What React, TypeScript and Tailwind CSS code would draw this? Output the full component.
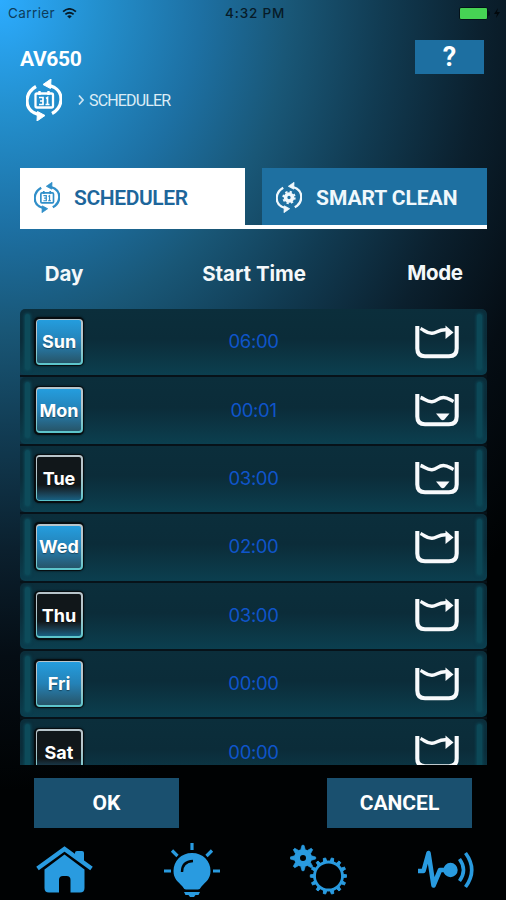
import React from "react";

type Mode = "side" | "bottom";
type Slot = { day: string; time: string; on: boolean; mode: Mode };

const SLOTS: Slot[] = [
  { day: "Sun", time: "06:00", on: true, mode: "side" },
  { day: "Mon", time: "00:01", on: true, mode: "bottom" },
  { day: "Tue", time: "03:00", on: false, mode: "bottom" },
  { day: "Wed", time: "02:00", on: true, mode: "side" },
  { day: "Thu", time: "03:00", on: false, mode: "side" },
  { day: "Fri", time: "00:00", on: true, mode: "side" },
  { day: "Sat", time: "00:00", on: false, mode: "side" },
];

/* Two circular arrows around a calendar or a gear; drawn on a 36x42 grid. */
function CycleIcon({ kind, className }: { kind: "calendar" | "gear"; className: string }) {
  return (
    <svg viewBox="0 0 36 42" className={className} fill="none" stroke="currentColor">
      <path d="M10 7.500C-1.500 14-1.500 28 7.500 33.500L16 37" strokeWidth="3.200" />
      <path d="M26 34.500C37.500 28 37.500 14 28.500 8.500L20 5" strokeWidth="3.200" />
      <path d="M17 5.500L25 0L24.500 9.500Z M19 36.500L11 42L11.500 32.500Z" fill="currentColor" strokeWidth="1" strokeLinejoin="round" />
      {kind === "calendar" ? (
        <>
          <rect x="9.500" y="14.500" width="17.500" height="14" rx="1.500" strokeWidth="2.300" />
          <path d="M13.500 12v4M22.500 12v4" strokeWidth="2.400" />
          <path d="M13 18.500h4v7h-4M14 22h3M20 19.500l1.500-1v7M19.500 25.500h4" strokeWidth="1.700" />
        </>
      ) : (
        <>
          <circle cx="18" cy="21" r="4.800" strokeWidth="5" />
          <circle cx="18" cy="21" r="8" strokeWidth="2.500" strokeDasharray="3.142 3.142" />
        </>
      )}
    </svg>
  );
}

function ModeIcon({ mode }: { mode: Mode }) {
  return (
    <svg viewBox="0 0 44 34" className="h-[34px] w-[44px]" fill="none" stroke="#f8fafc">
      <path d="M2.300 1V23.500C2.300 28.500 5 31.200 10 31.200H34C39 31.200 41.700 28.500 41.700 23.500V1" strokeWidth="4.100" />
      {mode === "side" ? (
        <>
          <path d="M5.500 3.500C10 5.500 12 8.500 17 8.300C22 8.200 23 4.500 31 4.800" strokeWidth="3.500" />
          <path d="M30.500 .5L38.500 7.500L30.500 14Z" fill="#f8fafc" stroke="none" />
        </>
      ) : (
        <>
          <path d="M5.500 4.500C10 6 12 9 17 8.700C22 8.500 23 4.500 28.500 4.500C33 4.500 35 7 38.500 8.500" strokeWidth="3.500" />
          <path d="M21 20.500H34.500L29.500 26.500Q27.800 28 26 26.500Z" fill="#f8fafc" stroke="none" />
        </>
      )}
    </svg>
  );
}

function DayButton({ slot }: { slot: Slot }) {
  return (
    <div className="h-[49px] w-[50px] shrink-0 rounded-[5px] bg-[#070d10] p-[1.500px] shadow-[0_0_2px_#070d10]">
      <div className="h-full w-full rounded-[4px] bg-linear-to-b from-[#b8c5cb] from-35% to-[#58c5cb] p-[1.800px]">
        <div
          className={
            "flex h-full w-full items-center justify-center rounded-[2px] bg-linear-to-b text-[18px] font-bold text-white " +
            (slot.on
              ? "from-[#249dde] via-[#2482b7] to-[#265569]"
              : "from-[#11171a] from-65% to-[#176082]")
          }
        >
          <span className="[text-shadow:0_1px_1px_#0006]">{slot.day}</span>
        </div>
      </div>
    </div>
  );
}

function ScheduleRow({ slot }: { slot: Slot }) {
  return (
    <div className="flex h-[68.400px] shrink-0 flex-col border-b-[2px] border-[#071219] bg-[#071821]/40">
      <div className="flex min-h-0 flex-1 items-center rounded-[5px] bg-linear-to-b from-[#0b2e3b] via-[#0b2c39] via-45% to-[#0b3f4f] pb-px">
        <div className="ml-[5px] h-[56px] w-[5px] rounded-full bg-[#0d4b5a] shadow-[0_0_3px_1px_#0d4b5a]" />
        <div className="ml-[4px]"><DayButton slot={slot} /></div>
        <div className="ml-[103.500px] w-[132px] pt-px text-center text-[18.500px] tracking-[-0.350px] text-[#0f55ca]">{slot.time}</div>
        <div className="ml-[95.500px]"><ModeIcon mode={slot.mode} /></div>
        <div className="ml-auto mr-[5px] h-[56px] w-[5px] rounded-full bg-[#0c4857] shadow-[0_0_3px_1px_#0c4857]" />
      </div>
    </div>
  );
}

const NAV = "text-[#299be0]";

function HouseIcon() {
  return (
    <svg viewBox="0 0 57 48" className={NAV + " h-[48px] w-[57px]"} fill="currentColor">
      <path d="M1.500 22.500L28.500 3L55.500 22.500" fill="none" stroke="currentColor" strokeWidth="4.300" />
      <path d="M39 7.500V6.500Q39 5 41 5H46Q48 5 48 7V16L39 9.500Z" />
      <path d="M8.500 23.500L28.500 8.500L48.500 23.500V42Q48.500 46.500 44 46.500H34.500V34Q34.500 30 30.500 30H27Q23 30 23 34V46.500H13Q8.500 46.500 8.500 42Z" />
    </svg>
  );
}

function BulbIcon() {
  return (
    <svg viewBox="0 0 56 55" className={NAV + " h-[55px] w-[56px]"}>
      <path d="M28 0V7M8 7.500L13.500 13M48 7.500L42.500 13M0 28H7M49 28H56" stroke="currentColor" strokeWidth="3.200" />
      <path d="M28 10C17 10 9.500 18 9.500 28C9.500 36 14 38.500 18.500 43.500Q20 46.500 22 46.500H34Q36 46.500 37.500 43.500C42 38.500 46.500 36 46.500 28C46.500 18 39 10 28 10Z" fill="currentColor" />
      <path d="M18 29Q18 18.500 29 18" fill="none" stroke="#02070a" strokeWidth="2.400" />
      <path d="M20 49H36L34.500 52H31.500L30 54H26L24.500 52H21.500Z" fill="currentColor" />
    </svg>
  );
}

function GearsIcon() {
  const smallTeeth = Array.from({ length: 8 }, (_, i) => i * 45);
  const largeTeeth = Array.from({ length: 14 }, (_, i) => (i * 360) / 14 + 12.8);
  return (
    <svg viewBox="0 0 57 51" className={NAV + " h-[51px] w-[57px]"} fill="none" stroke="currentColor">
      <circle cx="13" cy="14" r="6" strokeWidth="6" />
      {smallTeeth.map((angle) => (
        <path key={angle} d="M10.800 5.500L12 1.300H14L15.200 5.500Z" fill="currentColor" strokeWidth=".7" transform={`rotate(${angle} 13 14)`} />
      ))}
      <circle cx="38.500" cy="32" r="14" strokeWidth="2.800" />
      {largeTeeth.map((angle) => (
        <path key={angle} d="M36.800 18L37.300 13.800H39.700L40.200 18Z" fill="currentColor" strokeWidth=".9" transform={`rotate(${angle} 38.5 32)`} />
      ))}
    </svg>
  );
}

function PulseIcon() {
  return (
    <svg viewBox="0 0 58 42" className={NAV + " h-[42px] w-[58px]"} fill="none" stroke="currentColor">
      <path d="M0 22H5.500L10.500 4L15.500 36.500L22 21H30" strokeWidth="4.600" strokeLinejoin="round" />
      <circle cx="32.500" cy="21" r="7.200" fill="currentColor" stroke="none" />
      <path d="M41.500 10Q49.500 21 41.500 32M47.500 4Q60 21 47.500 38" strokeWidth="3.600" />
    </svg>
  );
}

export default function App() {
  return (
    <div className="flex h-[900px] w-[506px] flex-col overflow-hidden bg-black bg-[radial-gradient(ellipse_590px_670px_at_0_0,#2cacff_0%,#238fcd_17%,#1d70a3_34%,#195777_49%,#113b52_65%,#0b202e_82%,#050d14_98%,#000203_118%)] font-['Inter','Liberation_Sans',sans-serif]">
      <div className="flex h-[26px] shrink-0 items-center pl-[8px] pr-[6px] text-[13.500px] text-[#071b28]">
        <div className="flex w-[217px] items-center gap-[7px]">
          <span className="tracking-[0.400px] text-[#0d3d5c]">Carrier</span>
          <svg viewBox="0 0 16 12" className="h-[11px] w-[15px]" fill="none" stroke="currentColor">
            <path d="M1 4Q8-2 15 4M3.500 7Q8 3.200 12.500 7" strokeWidth="2" />
            <path d="M5.500 9Q8 7 10.500 9L8 11.500Z" fill="currentColor" stroke="none" />
          </svg>
        </div>
        <span className="font-medium tracking-[0.850px]">4:32 PM</span>
        <div className="ml-auto flex items-center">
          <div className="h-[13px] w-[29px] rounded-[2px] border border-[#04121a] bg-[#46d354]" />
          <div className="h-[5px] w-[2px] rounded-r bg-[#04121a]" />
          <svg viewBox="0 0 6 10" className="ml-[4px] h-[10px] w-[6px]" fill="#02080c">
            <path d="M4 0L0 6H3L2 10L6 4H3Z" />
          </svg>
        </div>
      </div>

      <header className="flex h-[142px] shrink-0 justify-between pl-[20px] pr-[22px] pt-[14px] text-white">
        <div>
          <h1 className="mt-[7px] h-[25px] font-['Roboto'] text-[21px] font-bold leading-[25px] tracking-[-0.350px]">AV650</h1>
          <div className="mt-[7px] flex items-center pl-[6px]">
            <CycleIcon kind="calendar" className="h-[42px] w-[36px]" />
            <svg viewBox="0 0 6 10" className="ml-[16px] h-[10px] w-[6px]" fill="none" stroke="#cae2f1" strokeWidth="1.700">
              <path d="M1 .5L5 5L1 9.500" />
            </svg>
            <span className="ml-[5px] pt-px font-['Roboto'] text-[16px] tracking-[-0.830px] text-[#dcecf6]">SCHEDULER</span>
          </div>
        </div>
        <div className="flex h-[34px] w-[69px] items-center justify-center bg-[#1d6fa1] pt-px font-['Roboto'] text-[27px] font-bold">?</div>
      </header>

      <div className="ml-[20px] mr-[19px] flex h-[61px] shrink-0 justify-between border-b-[4px] border-white font-['Roboto'] text-[21px]">
        <div className="-mb-[2px] flex w-[225px] items-center bg-white pl-[14px] font-semibold tracking-[-0.400px] text-[#1d669b]">
          <CycleIcon kind="calendar" className="h-[31px] w-[26px] text-[#318fc9]" />
          <span className="ml-[14px] pt-[2px]">SCHEDULER</span>
        </div>
        <div className="flex w-[225px] items-center bg-[#1e70a1] pl-[14px] pt-[2px] font-bold tracking-[-0.050px] text-[#f0f8fc]">
          <CycleIcon kind="gear" className="h-[31px] w-[26px]" />
          <span className="ml-[14px] pt-[2px]">SMART CLEAN</span>
        </div>
      </div>

      <div className="flex h-[80px] shrink-0 items-center pl-[20px] pr-[19px] pt-[10px] text-[20.500px] font-bold tracking-[-0.050px] text-[#f4f8fa]">
        <span className="w-[88px] text-center">Day</span>
        <span className="ml-[55px] w-[182px] text-center">Start Time</span>
        <span className="ml-[48px] w-[84px] pb-[2px] text-center tracking-[-0.350px]">Mode</span>
      </div>

      <main className="ml-[20px] mr-[19px] flex h-[456px] shrink-0 flex-col overflow-hidden rounded-t-[5px]">
        {SLOTS.map((slot) => <ScheduleRow key={slot.day} slot={slot} />)}
      </main>

      <div className="flex h-[76px] shrink-0 justify-between pl-[34px] pr-[34px] pt-[13px] font-['Roboto'] text-[21px] font-bold text-white">
        <button className="h-[50px] w-[145px] bg-[#1a506f] pt-[2px]">OK</button>
        <button className="h-[50px] w-[145px] bg-[#1a506f] pt-[2px]">CANCEL</button>
      </div>

      <nav className="flex h-[59px] shrink-0 items-start justify-between pl-[36px] pr-[30px]">
        <div className="pt-[5px]"><HouseIcon /></div>
        <div className="pt-[2px]"><BulbIcon /></div>
        <div className="pt-[3px]"><GearsIcon /></div>
        <div className="pt-[8px]"><PulseIcon /></div>
      </nav>
    </div>
  );
}
